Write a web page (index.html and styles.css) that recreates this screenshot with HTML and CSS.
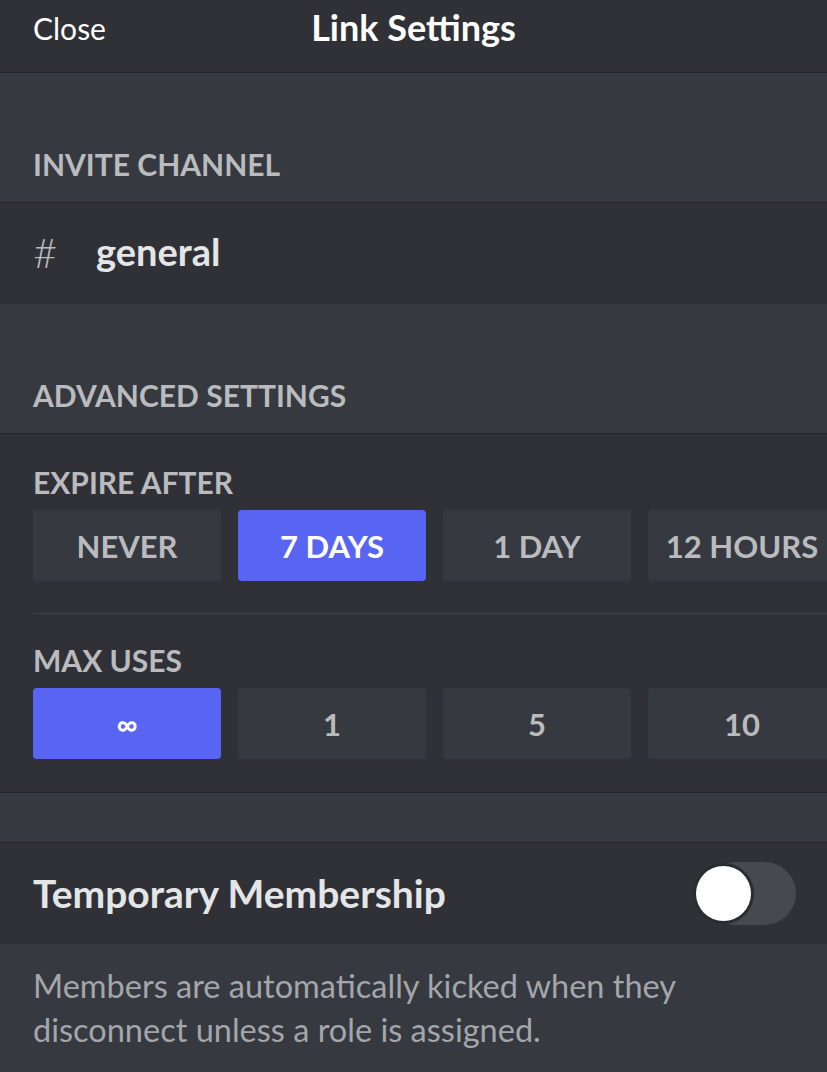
FILE: index.html
```html
<!DOCTYPE html>
<html lang="en">
<head>
<meta charset="utf-8">
<title>Link Settings</title>
<link rel="stylesheet" href="styles.css">
</head>
<body>
<div class="screen">
  <header class="topbar">
    <span class="close">Close</span>
    <span class="title">Link Settings</span>
  </header>

  <div class="section-head"><span class="label">INVITE CHANNEL</span></div>
  <div class="row channel-row">
    <span class="hash">#</span>
    <span class="channel">general</span>
  </div>

  <div class="section-head"><span class="label">ADVANCED SETTINGS</span></div>
  <div class="panel">
    <div class="group">
      <div class="label group-label">EXPIRE AFTER</div>
      <div class="options">
        <div class="opt">NEVER</div>
        <div class="opt selected">7 DAYS</div>
        <div class="opt">1 DAY</div>
        <div class="opt">12 HOURS</div>
      </div>
    </div>
    <div class="divider"></div>
    <div class="group">
      <div class="label group-label">MAX USES</div>
      <div class="options">
        <div class="opt selected inf">∞</div>
        <div class="opt">1</div>
        <div class="opt">5</div>
        <div class="opt">10</div>
      </div>
    </div>
  </div>

  <div class="spacer"></div>

  <div class="row toggle-row">
    <span class="toggle-label">Temporary Membership</span>
    <span class="toggle"><span class="knob"></span></span>
  </div>

  <div class="desc">Members are automatically kicked when they disconnect unless a role is assigned.</div>
</div>
</body>
</html>
```

FILE: styles.css
```css
html, body {
  margin: 0;
  padding: 0;
  background: #36393f;
  overflow: hidden;
}
.screen {
  width: 827px;
  height: 1072px;
  overflow: hidden;
  font-family: "Lato", "Noto Sans", sans-serif;
  background: #36393f;
  color: #dcddde;
}
.topbar {
  height: 72px;
  background: #2f3136;
  border-bottom: 1px solid #232428;
  display: flex;
  align-items: center;
  position: relative;
  padding: 0 33px;
}
.close {
  font-size: 30px;
  color: #ffffff;
  margin-top: -16px;
}
.title {
  position: absolute;
  left: 0;
  right: 0;
  top: 5px;
  text-align: center;
  font-size: 36px;
  font-weight: 700;
  color: #ffffff;
  pointer-events: none;
}
.section-head {
  height: 130px;
  display: flex;
  align-items: flex-end;
  padding: 0 33px 20px;
  box-sizing: border-box;
  border-bottom: 1px solid #232428;
}
.label {
  font-size: 30px;
  line-height: 36px;
  font-weight: 700;
  color: #b9bbbe;
}
.row {
  background: #2f3136;
  height: 101px;
  display: flex;
  align-items: center;
  padding: 0 33px;
  box-sizing: border-box;
  border-bottom: 1px solid #2b2d31;
}
.hash {
  font-size: 42px;
  font-weight: 300;
  color: #b9bbbe;
  width: 63px;
  margin-top: -2px;
}
.channel {
  font-size: 38px;
  font-weight: 700;
  color: #e4e5e7;
  margin-top: -4px;
}
.panel {
  background: #2f3136;
  padding: 30px 0 33px 33px;
  border-bottom: 1px solid #232428;
}
.group-label {
  margin-bottom: 10px;
}
.options {
  display: grid;
  grid-template-columns: repeat(4, 188px);
  gap: 17px;
}
.opt {
  height: 71px;
  background: #36393f;
  border-radius: 4px;
  display: flex;
  align-items: center;
  justify-content: center;
  font-size: 31px;
  font-weight: 700;
  color: #b9bbbe;
  white-space: nowrap;
}
.opt.selected {
  background: #5865f2;
  color: #ffffff;
}
.opt.inf {
  font-size: 29px;
}
.divider {
  height: 1px;
  background: #3e4147;
  margin: 32px 0 28px;
}
.spacer {
  height: 49px;
  border-bottom: 1px solid #232428;
}
.toggle-row {
  justify-content: space-between;
  padding-right: 31px;
}
.toggle-label {
  font-size: 39px;
  font-weight: 700;
  color: #e4e5e7;
}
.toggle {
  width: 92px;
  height: 63px;
  border-radius: 32px;
  background: #48494e;
  position: relative;
}
.knob {
  position: absolute;
  left: -8px;
  top: 4px;
  width: 55px;
  height: 55px;
  border-radius: 50%;
  background: #ffffff;
  box-shadow: 0 0 0 3px #2b2c30;
}
.desc {
  padding: 20px 33px 0;
  font-size: 32.5px;
  line-height: 44px;
  color: #a3a6aa;
}
```
